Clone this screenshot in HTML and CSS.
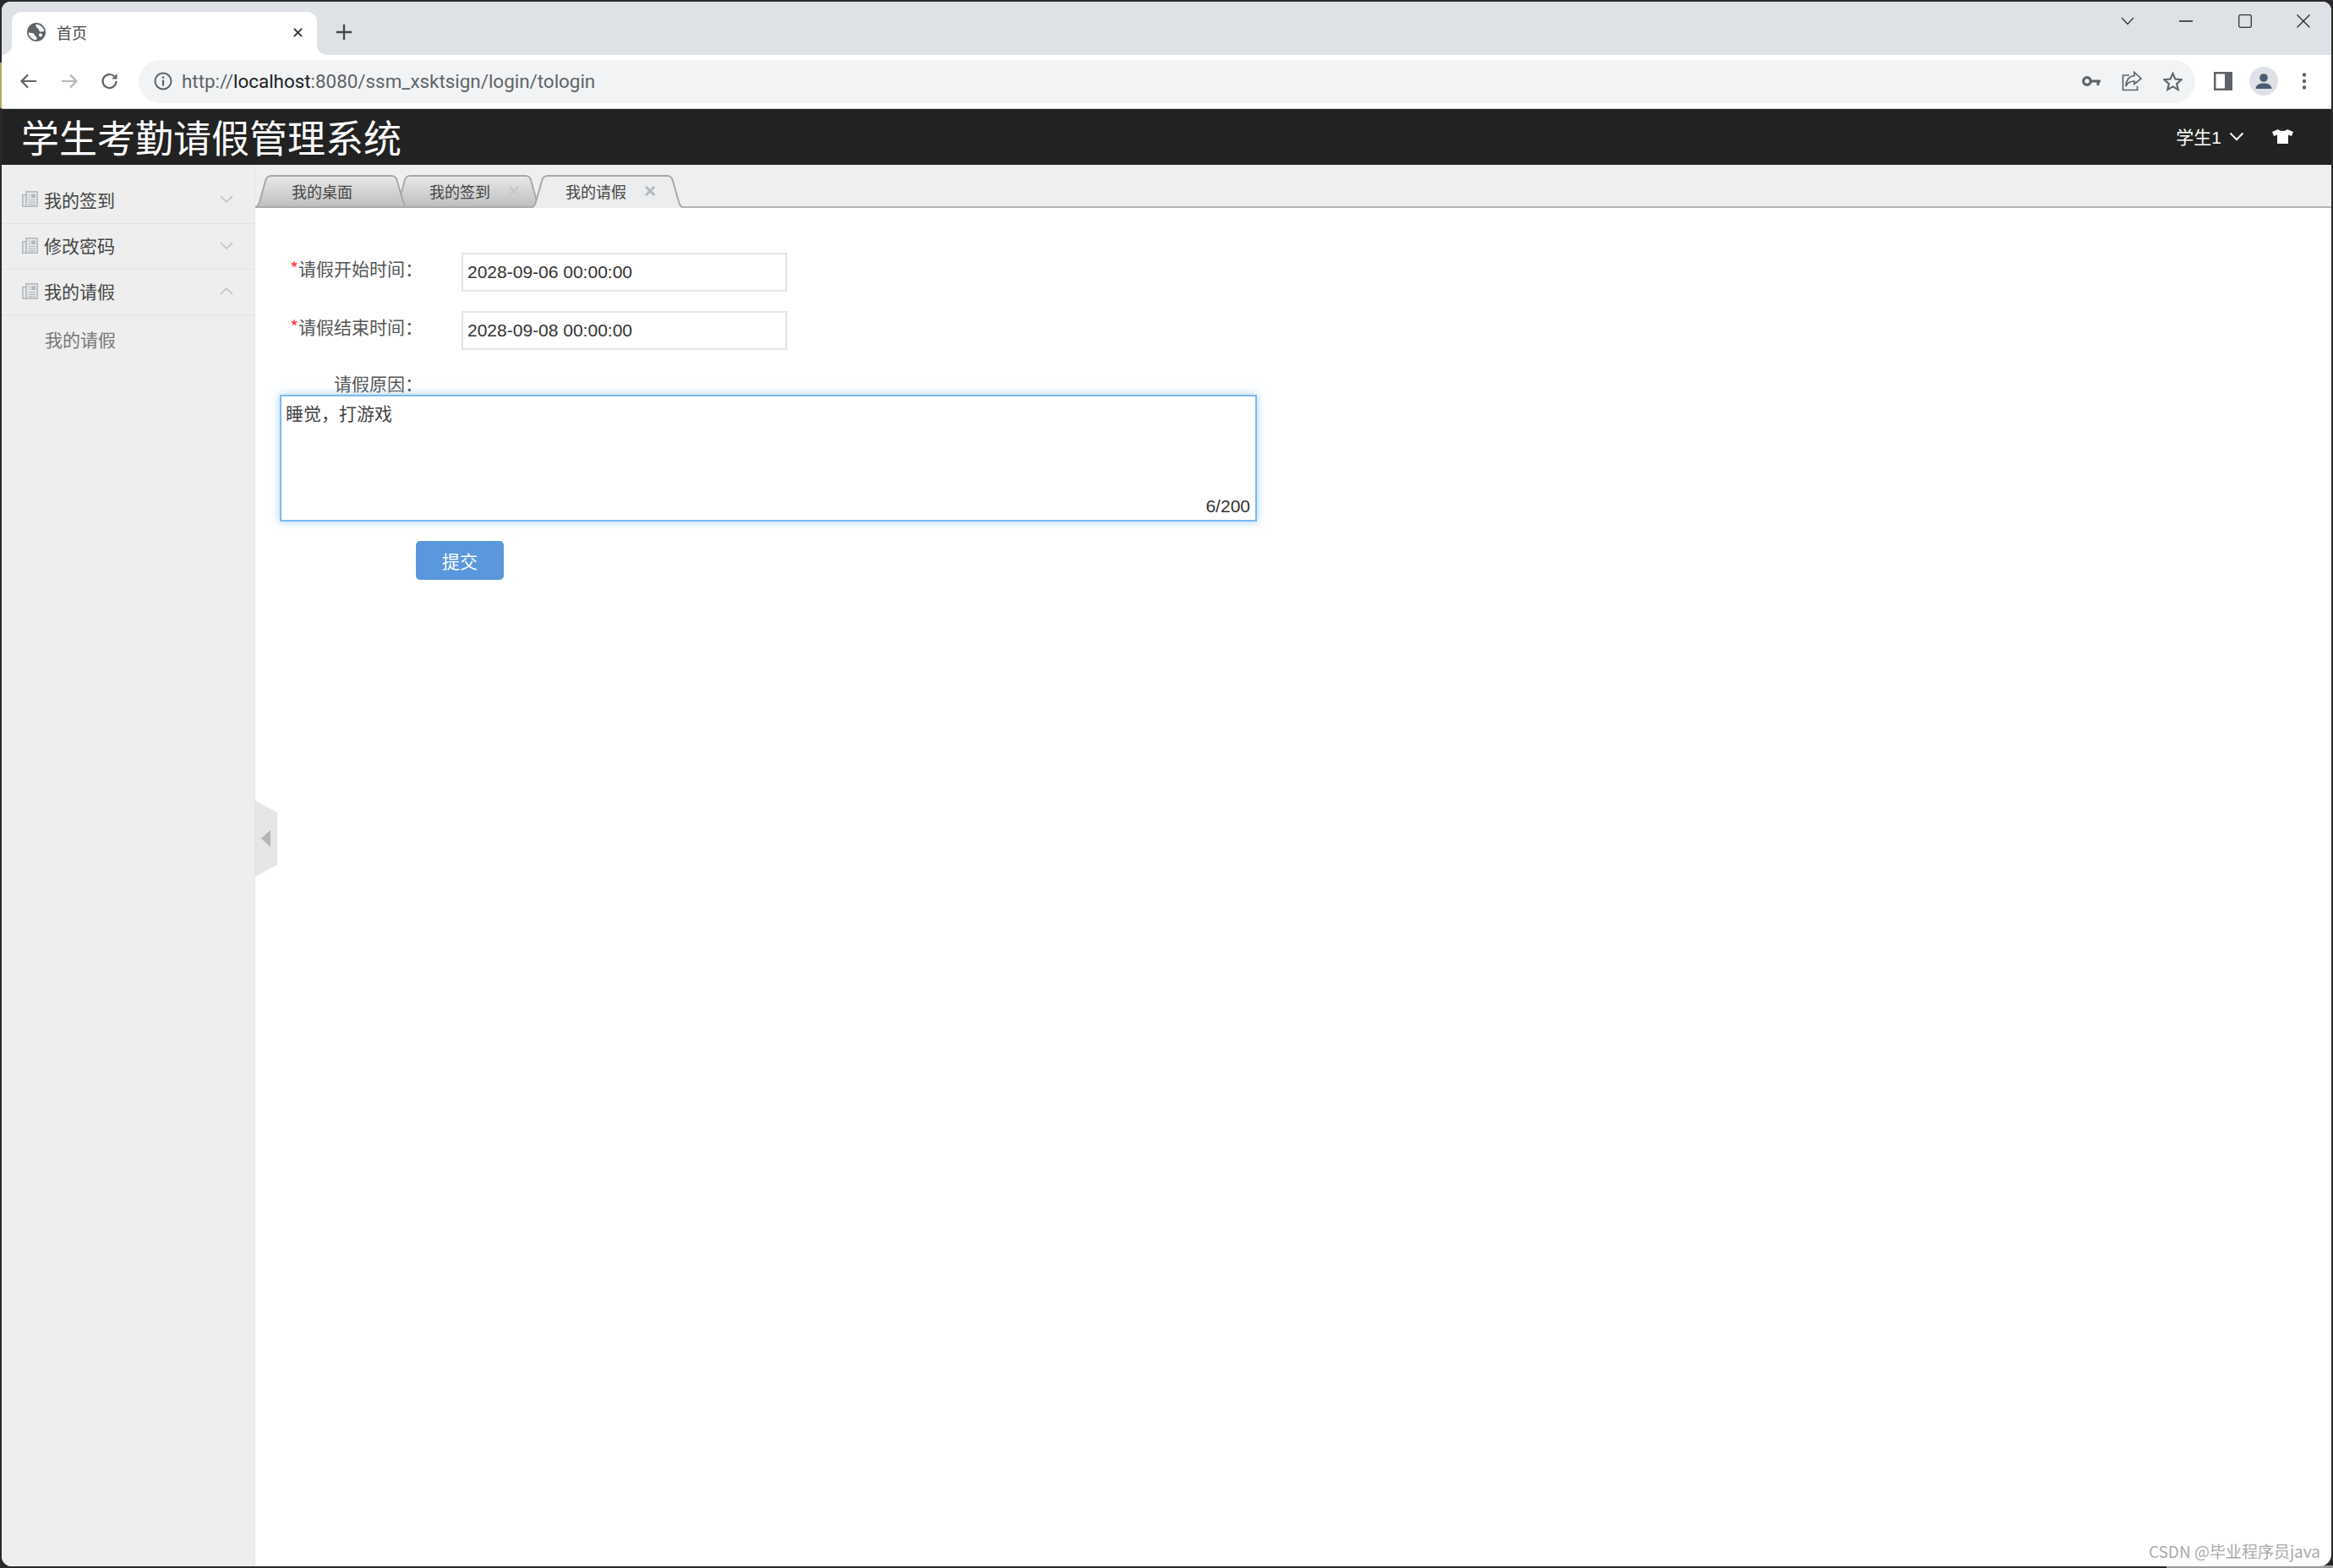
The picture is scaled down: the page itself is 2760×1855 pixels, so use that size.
FILE: index.html
```html
<!DOCTYPE html>
<html lang="zh-CN">
<head>
<meta charset="utf-8">
<title>首页</title>
<link rel="stylesheet" href="styles.css">
</head>
<body>
<div class="window">
  <div class="tabstrip">
    <div class="btab">
      <svg class="globe" viewBox="0 0 22 22"><circle cx="11" cy="11" r="11" fill="#5f6368"/><path d="M10.500 1.800C10 4 11 6 13.500 7 13.500 9.500 15.500 11 17.500 10.500L20.300 10C19.800 5.500 15.500 1.800 10.500 1.800Z" fill="#fff"/><path d="M1.700 11.500C2 16 6 20.200 11 20.200 12 18.500 11.500 16 9.500 15.500 9 13 7 11.500 5 12Z" fill="#fff"/><circle cx="16" cy="14.500" r="2" fill="#fff"/></svg>
      <span class="btab-title">首页</span>
      <svg class="btab-x" viewBox="0 0 14 14"><path d="M2 2 12 12M12 2 2 12" stroke="#333" stroke-width="2" fill="none"/></svg>
    </div>
    <svg class="newtab" viewBox="0 0 18 18"><path d="M9 0V18M0 9H18" stroke="#45484c" stroke-width="2.400"/></svg>
    <div class="wincontrols">
      <svg class="wc wc-caret" viewBox="0 0 16 10"><path d="M1 1 8 8.500 15 1" stroke="#333" stroke-width="1.200" fill="none"/></svg>
      <svg class="wc wc-min" viewBox="0 0 16 2"><path d="M0 1H16" stroke="#222" stroke-width="1.300"/></svg>
      <svg class="wc wc-max" viewBox="0 0 16 16"><rect x=".7" y=".7" width="14.600" height="14.600" rx="2" stroke="#333" stroke-width="1.300" fill="none"/></svg>
      <svg class="wc wc-close" viewBox="0 0 16 16"><path d="M.5.5 15.500 15.500M15.500.5.500 15.500" stroke="#222" stroke-width="1.200"/></svg>
    </div>
  </div>
  <div class="toolbar">
    <div class="nav">
      <svg class="nav-icon" viewBox="0 0 24 24"><path d="M21 12H4M11 4.500 3.500 12 11 19.500" stroke="#5f6368" stroke-width="2.200" fill="none"/></svg>
      <svg class="nav-icon" viewBox="0 0 24 24"><path d="M3 12H20M13 4.500 20.500 12 13 19.500" stroke="#b4b7bb" stroke-width="2.200" fill="none"/></svg>
      <svg class="nav-icon" viewBox="0 0 24 24"><path d="M19.500 12a8 8 0 1 1-2.400-5.700" stroke="#5f6368" stroke-width="2.200" fill="none"/><path d="M20.500 3V9.500H14Z" fill="#5f6368"/></svg>
    </div>
    <div class="urlbar">
      <svg class="info" viewBox="0 0 22 22"><circle cx="11" cy="11" r="9.500" stroke="#5f6368" stroke-width="2" fill="none"/><path d="M11 9.500V16.500M11 5.500V7.800" stroke="#5f6368" stroke-width="2.200"/></svg>
      <span class="url"><span class="url-dim">http://</span>localhost<span class="url-dim">:8080/ssm_xsktsign/login/tologin</span></span>
      <div class="url-actions">
        <svg class="ua-key" viewBox="0 0 22 14"><circle cx="6" cy="7" r="4.300" stroke="#5f6368" stroke-width="3.200" fill="none"/><path d="M10 5.500H22V8.500H20.500V12H17.500V8.500H10Z" fill="#5f6368"/></svg>
        <svg class="ua-share" viewBox="0 0 24 24"><path d="M9 5H1.500V22.500H18.500V18" stroke="#5f6368" stroke-width="1.700" fill="none"/><path d="M15 1.500 23 9 15 15.500V12C10 12 7 14 5 18 5 11 9 6 15 5.500Z" stroke="#5f6368" stroke-width="1.700" fill="none"/></svg>
        <svg class="ua-star" viewBox="0 0 24 24"><path d="M12 2 15 9 22.500 9.700 16.800 14.700 18.500 22 12 18.200 5.500 22 7.200 14.700 1.500 9.700 9 9Z" stroke="#5f6368" stroke-width="2.200" fill="none"/></svg>
      </div>
    </div>
    <div class="tool-right">
      <svg class="tr-panel" viewBox="0 0 22 22"><rect width="22" height="22" fill="#5f6368"/><rect x="2.500" y="2.500" width="10.500" height="17" fill="#fff"/></svg>
      <svg class="tr-avatar" viewBox="0 0 34 34"><circle cx="17" cy="17" r="17" fill="#dee1e6"/><circle cx="17" cy="13" r="4.800" fill="#4c5a73"/><path d="M7.500 26C8 21 12 19.500 17 19.500S26 21 26.500 26Z" fill="#4c5a73"/></svg>
      <svg class="tr-dots" viewBox="0 0 6 20"><circle cx="3" cy="2.500" r="2.200" fill="#5f6368"/><circle cx="3" cy="10" r="2.200" fill="#5f6368"/><circle cx="3" cy="17.500" r="2.200" fill="#5f6368"/></svg>
    </div>
  </div>
  <header class="apphead">
    <h1 class="apptitle">学生考勤请假管理系统</h1>
    <div class="userbox">
      <span class="username">学生1</span>
      <svg class="userchev" viewBox="0 0 18 11"><path d="M1.500 1.500 9 9 16.500 1.500" stroke="#fff" stroke-width="2" fill="none"/></svg>
      <svg class="shirt" viewBox="0 0 25 17"><path d="M7 0 0 3 2 8 6 6.500V17H19V6.500L23 8 25 3 18 0C16 2.500 9 2.500 7 0Z" fill="#fff"/></svg>
    </div>
  </header>
  <div class="appbody">
    <aside class="sidebar">
      <div class="menu-row">
        <svg class="menu-icon" viewBox="0 0 19 19"><rect x=".8" y="4.800" width="4.500" height="13.400" fill="#e6e8ea" stroke="#b4b9c0" stroke-width="1.600"/><rect x="5" y=".8" width="13.200" height="17.400" fill="#e6e8ea" stroke="#b4b9c0" stroke-width="1.600"/><path d="M11 3.500H16V8H11Z" fill="#b4b9c0"/><path d="M7.500 4.500H10M7.500 7.500H10M7.500 10.500H16M7.500 13.200H16M7.500 15.800H16" stroke="#b4b9c0" stroke-width="1.200"/></svg>
        <span class="menu-label">我的签到</span>
        <svg class="menu-chev" viewBox="0 0 16 9"><path d="M1 1 8 8 15 1" stroke="#c8c8c8" stroke-width="1.800" fill="none"/></svg>
      </div>
      <div class="menu-row">
        <svg class="menu-icon" viewBox="0 0 19 19"><rect x=".8" y="4.800" width="4.500" height="13.400" fill="#e6e8ea" stroke="#b4b9c0" stroke-width="1.600"/><rect x="5" y=".8" width="13.200" height="17.400" fill="#e6e8ea" stroke="#b4b9c0" stroke-width="1.600"/><path d="M11 3.500H16V8H11Z" fill="#b4b9c0"/><path d="M7.500 4.500H10M7.500 7.500H10M7.500 10.500H16M7.500 13.200H16M7.500 15.800H16" stroke="#b4b9c0" stroke-width="1.200"/></svg>
        <span class="menu-label">修改密码</span>
        <svg class="menu-chev" viewBox="0 0 16 9"><path d="M1 1 8 8 15 1" stroke="#c8c8c8" stroke-width="1.800" fill="none"/></svg>
      </div>
      <div class="menu-row">
        <svg class="menu-icon" viewBox="0 0 19 19"><rect x=".8" y="4.800" width="4.500" height="13.400" fill="#e6e8ea" stroke="#b4b9c0" stroke-width="1.600"/><rect x="5" y=".8" width="13.200" height="17.400" fill="#e6e8ea" stroke="#b4b9c0" stroke-width="1.600"/><path d="M11 3.500H16V8H11Z" fill="#b4b9c0"/><path d="M7.500 4.500H10M7.500 7.500H10M7.500 10.500H16M7.500 13.200H16M7.500 15.800H16" stroke="#b4b9c0" stroke-width="1.200"/></svg>
        <span class="menu-label">我的请假</span>
        <svg class="menu-chev" viewBox="0 0 16 9"><path d="M1 8 8 1 15 8" stroke="#c8c8c8" stroke-width="1.800" fill="none"/></svg>
      </div>
      <div class="submenu-row">我的请假</div>
    </aside>
    <main class="main">
      <div class="tabbar">
        <div class="ptab ptab-first">
          <svg class="ptab-shape" viewBox="0 0 180 38" preserveAspectRatio="none"><defs><linearGradient id="tabg" x1="0" y1="0" x2="0" y2="1"><stop offset="0" stop-color="#e8e9e9"/><stop offset="1" stop-color="#bebebe"/></linearGradient></defs><path d="M0 37C2 37 4 35 5 31L12 7C13 3 15 1 19 1H161C165 1 167 3 168 7L175 31C176 35 178 37 180 37Z" fill="url(#tabg)" stroke="#a8a8a8" stroke-width="2"/></svg>
          <span class="ptab-text">我的桌面</span>
        </div>
        <div class="ptab ptab-second">
          <svg class="ptab-shape" viewBox="0 0 180 38" preserveAspectRatio="none"><path d="M0 37C2 37 4 35 5 31L12 7C13 3 15 1 19 1H161C165 1 167 3 168 7L175 31C176 35 178 37 180 37Z" fill="url(#tabg)" stroke="#a8a8a8" stroke-width="2"/></svg>
          <span class="ptab-text">我的签到</span>
          <span class="ptab-x ptab-x-dim">×</span>
        </div>
        <div class="ptab ptab-active">
          <svg class="ptab-shape" viewBox="0 0 180 38" preserveAspectRatio="none"><path d="M0 38C2 38 4 35 5 31L12 7C13 3 15 1 19 1H161C165 1 167 3 168 7L175 31C176 35 178 38 180 38Z" fill="#ecedee"/><path d="M0 37C2 37 4 35 5 31L12 7C13 3 15 1 19 1H161C165 1 167 3 168 7L175 31C176 35 178 37 180 37" fill="none" stroke="#a8a8a8" stroke-width="2"/></svg>
          <span class="ptab-text">我的请假</span>
          <span class="ptab-x">×</span>
        </div>
      </div>
      <form class="form">
        <div class="form-row">
          <label class="form-label"><span class="req">*</span>请假开始时间：</label>
          <input class="form-input" type="text" value="2028-09-06 00:00:00">
        </div>
        <div class="form-row">
          <label class="form-label"><span class="req">*</span>请假结束时间：</label>
          <input class="form-input" type="text" value="2028-09-08 00:00:00">
        </div>
        <label class="form-label reason-label">请假原因：</label>
        <div class="reason">
          <textarea class="reason-text">睡觉，打游戏</textarea>
          <span class="reason-count">6/200</span>
        </div>
        <button class="submit" type="button">提交</button>
      </form>
      <div class="collapse"><svg class="collapse-arrow" viewBox="0 0 11 20"><path d="M11 0V20L0 10Z" fill="#b5b5b5"/></svg></div>
      <div class="watermark">CSDN @毕业程序员java</div>
    </main>
  </div>
</div>
<div class="edge-sliver"></div>
</body>
</html>
```
FILE: styles.css
```css
* { box-sizing: border-box; }
html, body { margin: 0; height: 100%; overflow: hidden; }
body {
  font-family: "Liberation Sans", "Noto Sans CJK SC", sans-serif; color: #333;
  background: linear-gradient(#9a9a9a, #9a9a9a) 2563px 100% / 197px 3px no-repeat, #2a2a2a;
}
.window {
  width: 2756px; height: 1851px; margin: 2px; background: #fff;
  display: flex; flex-direction: column; overflow: hidden;
  border-radius: 10px 10px 14px 12px;
}
.edge-sliver { position: absolute; left: 0; top: 74px; width: 2px; height: 54px; background: #bda55e; }
.tabstrip { height: 63px; background: #dee1e6; display: flex; align-items: flex-start; padding-top: 12px; padding-left: 12px; flex: none; }
.btab { position: relative; width: 361px; height: 51px; background: #fff; border-radius: 12px 12px 0 0; display: flex; align-items: center; padding: 0 16px 3px 18px; }
.btab::before, .btab::after { content: ""; position: absolute; bottom: 0; width: 12px; height: 12px; }
.btab::before { left: -12px; background: radial-gradient(circle at 0 0, #dee1e6 11.500px, #fff 12.500px); }
.btab::after { right: -12px; background: radial-gradient(circle at 100% 0, #dee1e6 11.500px, #fff 12.500px); }
.globe { width: 22px; height: 22px; }
.btab-title { font-family: "Noto Sans CJK SC", sans-serif; font-size: 18px; color: #45484c; margin-left: 13px; flex: 1; }
.btab-x { width: 13px; height: 13px; }
.newtab { width: 18px; height: 18px; margin: 15px 0 0 23px; }
.wincontrols { margin-left: auto; display: flex; align-items: center; height: 20px; margin-top: 1px; }
.wc { display: block; }
.wc-caret { width: 16px; height: 10px; margin-right: 53px; }
.wc-min { width: 16px; height: 2px; margin-right: 54px; }
.wc-max { width: 16px; height: 16px; margin-right: 53px; }
.wc-close { width: 16px; height: 16px; margin-right: 25px; }

.toolbar { height: 64px; background: #fff; border-bottom: 1px solid #d3d3d3; display: flex; align-items: center; flex: none; padding-bottom: 1px; }
.nav { width: 162px; padding-left: 20px; display: flex; gap: 24px; flex: none; }
.nav-icon { width: 24px; height: 24px; }
.urlbar { width: 2433px; height: 51px; border-radius: 26px; background: #f1f3f4; display: flex; align-items: center; padding-left: 18px; flex: none; }
.info { width: 22px; height: 22px; }
.url { font-family: "Roboto", sans-serif; font-size: 22.400px; color: #202124; margin-left: 11px; white-space: nowrap; }
.url-dim { color: #5f6368; }
.url-actions { margin-left: auto; display: flex; align-items: center; padding-right: 15px; gap: 25px; }
.ua-key { width: 22px; height: 14px; }
.ua-share { width: 24px; height: 24px; }
.ua-star { width: 23px; height: 23px; }
.tool-right { display: flex; align-items: center; padding-left: 22px; }
.tr-panel { width: 22px; height: 22px; }
.tr-avatar { width: 34px; height: 34px; margin-left: 20px; }
.tr-dots { width: 6px; height: 20px; margin-left: 28px; }

.apphead { height: 66px; background: #222; display: flex; align-items: center; flex: none; padding: 0 45px 0 23px; }
.apptitle { margin: 0; font: 400 45px/66px "Noto Sans CJK SC", sans-serif; color: #fff; }
.userbox { margin-left: auto; display: flex; align-items: center; padding-bottom: 2px; }
.username { font-size: 21px; color: #fff; margin-left: 1px; }
.userchev { width: 18px; height: 11px; margin-left: 9px; }
.shirt { width: 25px; height: 17px; margin-left: 33px; }

.appbody { flex: 1; display: flex; min-height: 0; }
.sidebar { width: 300px; background: #eee; border-right: 1px solid #e4e4e4; padding-top: 15px; flex: none; }
.menu-row { height: 55px; border-bottom: 1px solid #e3e3e3; display: flex; align-items: center; padding: 0 25px 3px 24px; }
.menu-row + .menu-row { height: 54px; }
.menu-icon { width: 19px; height: 19px; flex: none; }
.menu-label { font: 21px "Noto Sans CJK SC", sans-serif; color: #444; margin-left: 7px; flex: 1; }
.menu-chev { width: 16px; height: 9px; flex: none; }
.submenu-row { height: 58px; padding-left: 51px; font: 21px/56px "Noto Sans CJK SC", sans-serif; color: #777; }

.main { flex: 1; position: relative; min-width: 0; }
.tabbar { height: 51px; background: #eeeff0; border-bottom: 2px solid #b2b2b2; display: flex; align-items: flex-start; padding-top: 12px; }
.ptab { position: relative; height: 39px; display: flex; align-items: center; padding-bottom: 2px; font: 18px "Noto Sans CJK SC", sans-serif; color: #444; }
.ptab-shape { position: absolute; inset: 0; width: 100%; height: 100%; }
.ptab-text { position: relative; white-space: nowrap; }
.ptab-x { position: relative; margin-left: 21px; font: 700 24px/1 "Liberation Sans", sans-serif; color: #b3b7ba; }
.ptab-x-dim { color: #c5c9cc; }
.ptab-first { width: 180px; padding-left: 43px; z-index: 2; }
.ptab-second { width: 173px; margin-left: -15px; padding-left: 41px; z-index: 1; }
.ptab-active { width: 179px; margin-left: -11px; padding-left: 40px; z-index: 3; }

.form { padding: 53px 0 0 29px; }
.form-row { display: flex; align-items: flex-start; height: 46px; margin-bottom: 23px; }
.form-label { width: 169px; text-align: right; font: 21px/30px "Noto Sans CJK SC", sans-serif; color: #555; white-space: nowrap; margin-top: 3px; }
.req { color: #f33; }
.form-input { width: 385px; height: 46px; margin-left: 46px; border: 2px solid #e4e4e4; padding: 0 5px; font: 21px "Liberation Sans", sans-serif; color: #333; background: #fff; outline: 0; }
.reason-label { display: block; height: 30px; line-height: 32px; margin-top: 0; }
.reason { position: relative; width: 1156px; height: 150px; }
.reason-text {
  display: block; width: 100%; height: 100%; resize: none; outline: 0; padding: 4px 5px;
  border: 2px solid #7cb9ee; box-shadow: 0 0 10px rgba(102, 175, 233, .6);
  font: 21px/30px "Noto Sans CJK SC", sans-serif; color: #444;
}
.reason-count { position: absolute; right: 8px; bottom: 4px; font-size: 21px; line-height: 28px; color: #333; }
.submit { display: block; width: 104px; height: 46px; margin: 23px 0 0 161px; background: #5a98de; color: #fff; border: 0; border-radius: 5px; font: 21px "Noto Sans CJK SC", sans-serif; padding: 0; }

.collapse { position: absolute; left: 0; top: 752px; width: 26px; height: 90px; background: #e6e6e6; clip-path: polygon(0 0, 26px 14px, 26px 76px, 0 100%); display: flex; align-items: center; padding-left: 7px; }
.collapse-arrow { width: 11px; height: 20px; }
.watermark { position: absolute; right: 13px; bottom: 5px; font: 19px "Noto Sans CJK SC", "Liberation Sans", sans-serif; color: #aaa; white-space: nowrap; }
```
